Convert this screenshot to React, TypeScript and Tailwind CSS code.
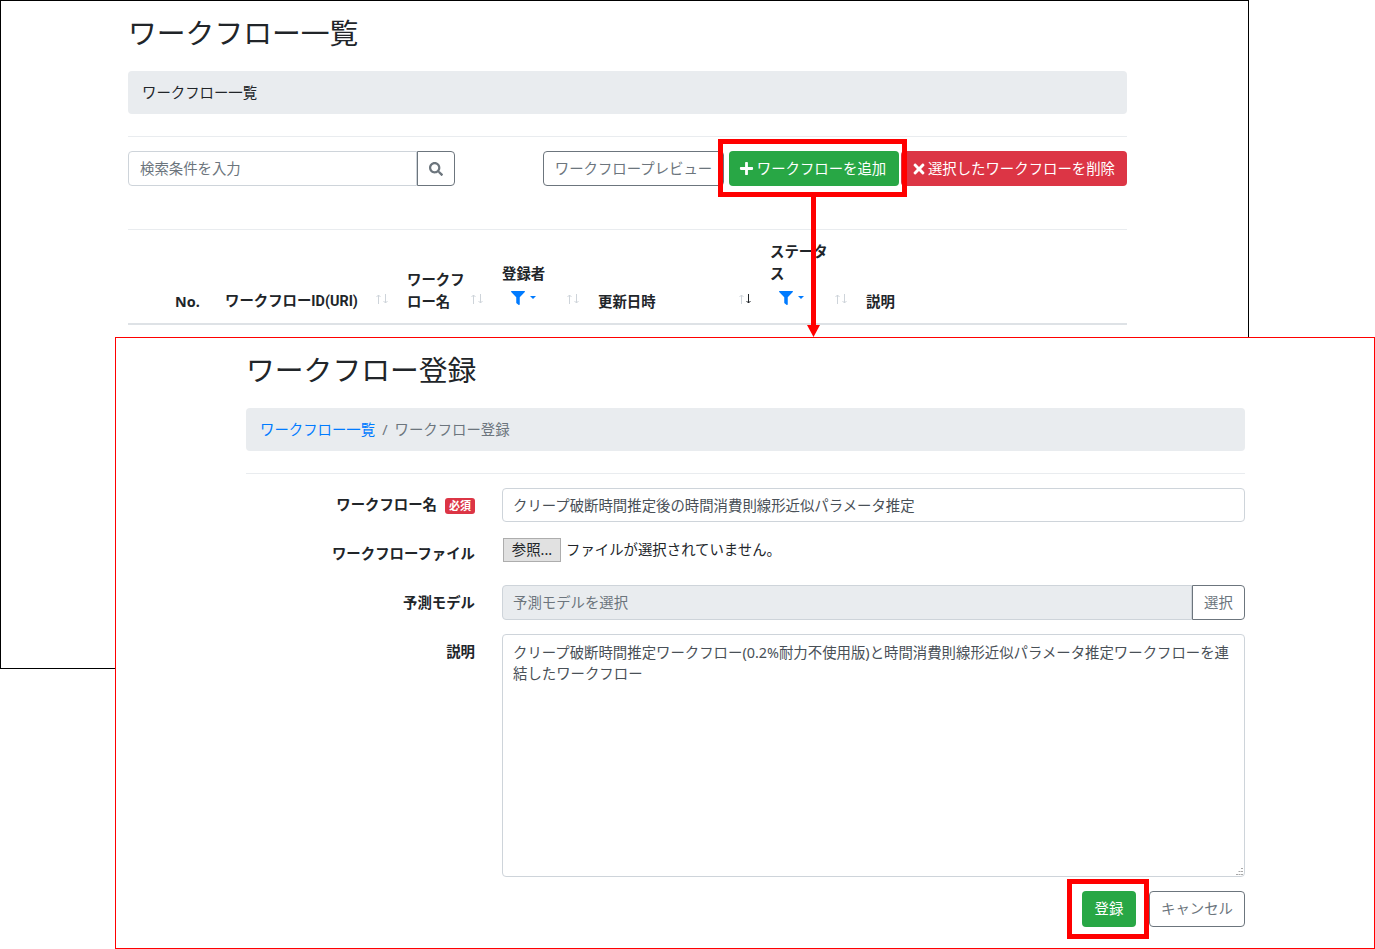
import { FaFilter, FaPlus, FaSearch, FaTimes } from "react-icons/fa"

const WORKFLOW_NAME = "クリープ破断時間推定後の時間消費則線形近似パラメータ推定"
const DESCRIPTION =
  "クリープ破断時間推定ワークフロー(0.2%耐力不使用版)と時間消費則線形近似パラメータ推定ワークフローを連結したワークフロー"

function SortIcon({ active = false }: { active?: boolean }) {
  return (
    <svg width="14" height="10" viewBox="0 0 14 10" fill="none" strokeWidth="1" className="shrink-0 mb-[9px]">
      <path d="M3.5 10V1M1.5 3L3.5 1L5.5 3" stroke="#ced4da" />
      <path d="M10.5 0V9M8.5 7L10.5 9L12.5 7" stroke={active ? "#212529" : "#ced4da"} />
    </svg>
  )
}

function FilterToggle() {
  return (
    <div className="flex items-center h-[25px] pl-[9px] gap-[5px] text-[#007bff]">
      <FaFilter className="w-[14px] h-[14px]" />
      <span className="w-0 h-0 border-x-[3px] border-x-transparent border-t-[3px] border-t-[#007bff]" />
    </div>
  )
}

function HeaderCell({
  width,
  sort = true,
  active = false,
  children,
}: {
  width: string
  sort?: boolean
  active?: boolean
  children: React.ReactNode
}) {
  return (
    <div className={`${width} shrink-0 flex items-end justify-between pl-[10px] pr-[8px] pb-[10px]`}>
      <div className="font-bold leading-[22px]">{children}</div>
      {sort && <SortIcon active={active} />}
    </div>
  )
}

function FilterCell({ width, children }: { width: string; children: React.ReactNode }) {
  return (
    <div className={`${width} shrink-0 flex items-end justify-between pl-[10px] pr-[8px] pb-[10px]`}>
      <div className="font-bold leading-[22px] mb-[3px]">
        {children}
        <FilterToggle />
      </div>
      <SortIcon />
    </div>
  )
}

function PageHeading({ title, children }: { title: string; children: React.ReactNode }) {
  return (
    <>
      <h1 className="text-[28.8px] leading-[34px] pt-[15px] text-[#212529]">{title}</h1>
      <div className="mt-[21px] h-[43px] bg-[#e9ecef] rounded flex items-center px-[14px]">{children}</div>
      <div className="mt-[22px] border-t border-[#e9ecef]" />
    </>
  )
}

function WorkflowList() {
  return (
    <div className="absolute left-0 top-0 w-[1249px] h-[669px] border border-black bg-white pl-[127px]">
      <div className="w-[999px]">
        <PageHeading title="ワークフロー一覧">
          <span>ワークフロー一覧</span>
        </PageHeading>

        <div className="mt-[14px] flex items-center h-[35px]">
          <div className="flex w-[327px] h-[35px]">
            <div className="flex-1 border border-[#ced4da] rounded-l px-[11px] flex items-center text-[#6c757d]">
              検索条件を入力
            </div>
            <div className="w-[38px] border border-[#6c757d] rounded-r flex items-center justify-center text-[#6c757d]">
              <FaSearch className="w-[14px] h-[14px]" />
            </div>
          </div>
          <div className="ml-auto flex h-[35px]">
            <div className="w-[181px] border border-[#6c757d] rounded flex items-center justify-center text-[#6c757d]">
              ワークフロープレビュー
            </div>
            <div className="ml-[5px] w-[170px] bg-[#28a745] rounded text-white flex items-center justify-center gap-[3px] pr-[3px]">
              <FaPlus className="w-[15px] h-[15px]" />
              ワークフローを追加
            </div>
            <div className="ml-[2px] w-[226px] bg-[#dc3545] rounded text-white flex items-center justify-end pr-[12px] gap-[1px]">
              <FaTimes className="w-[16px] h-[16px]" />
              選択したワークフローを削除
            </div>
          </div>
        </div>

        <div className="mt-[43px] border-t border-[#e9ecef]" />
        <div className="flex items-stretch h-[95px] border-b-2 border-[#dee2e6]">
          <div className="w-[87px] shrink-0 flex items-end pl-[47px] pb-[10px] font-bold leading-[22px]">No.</div>
          <HeaderCell width="w-[182px]">
            ワークフロー<span className="font-['Roboto']">ID(URI)</span>
          </HeaderCell>
          <HeaderCell width="w-[95px]">
            ワークフ
            <br />
            ロー名
          </HeaderCell>
          <FilterCell width="w-[96px]">登録者</FilterCell>
          <HeaderCell width="w-[172px]" active>
            更新日時
          </HeaderCell>
          <FilterCell width="w-[96px]">
            ステータ
            <br />ス
          </FilterCell>
          <HeaderCell width="flex-1" sort={false}>
            説明
          </HeaderCell>
        </div>
      </div>
    </div>
  )
}

function FormRow({ label, children, top = false }: { label: React.ReactNode; children: React.ReactNode; top?: boolean }) {
  return (
    <div className="flex">
      <div
        className={`w-[229px] shrink-0 flex justify-end font-bold ${top ? "pt-[7px]" : "items-center"}`}
      >
        {label}
      </div>
      <div className="ml-[27px] flex-1 min-w-0">{children}</div>
    </div>
  )
}

function WorkflowForm() {
  return (
    <div className="absolute left-[115px] top-[337px] w-[1260px] h-[612px] border border-[#ff0000] bg-white pl-[130px]">
      <div className="w-[999px]">
        <PageHeading title="ワークフロー登録">
          <span className="text-[#007bff]">ワークフロー一覧</span>
          <span className="text-[#6c757d] px-[7px]">/</span>
          <span className="text-[#6c757d]">ワークフロー登録</span>
        </PageHeading>

        <div className="mt-[14px]">
          <FormRow
            label={
              <span className="flex items-center gap-[8px]">
                ワークフロー名
                <span className="mt-[2px] w-[30px] h-[16px] rounded-[3px] bg-[#dc3545] text-white text-[11px] leading-[16px] text-center">
                  必須
                </span>
              </span>
            }
          >
            <input
              readOnly
              value={WORKFLOW_NAME}
              className="w-full h-[34px] border border-[#ced4da] rounded px-[10px] pb-[2px] text-[#495057] outline-none"
            />
          </FormRow>
        </div>

        <div className="mt-[15px] h-[48px]">
          <FormRow label={<span className="-mt-px">ワークフローファイル</span>} top>
            <div className="flex items-center gap-[5px] pl-px pt-px">
              <span className="w-[58px] h-[24px] bg-[#e1e1e1] border border-[#adadad] flex items-center justify-center">
                参照...
              </span>
              ファイルが選択されていません。
            </div>
          </FormRow>
        </div>

        <FormRow label="予測モデル">
          <div className="flex h-[35px]">
            <div className="flex-1 bg-[#e9ecef] border border-[#ced4da] rounded-l px-[10px] flex items-center text-[#6c757d]">
              予測モデルを選択
            </div>
            <div className="w-[53px] border border-[#6c757d] rounded-r flex items-center justify-center text-[#6c757d]">
              選択
            </div>
          </div>
        </FormRow>

        <div className="mt-[14px]">
          <FormRow label="説明" top>
            <div className="relative">
              <textarea
                readOnly
                value={DESCRIPTION}
                className="block w-full h-[243px] resize-none border border-[#ced4da] rounded px-[10px] py-[7px] leading-[21px] text-[#495057] outline-none"
              />
              {/* resize grip */}
              <svg className="absolute right-[2px] bottom-[2px]" width="7" height="7" viewBox="0 0 7 7" fill="#a8a8a8">
                <rect x="5" y="0" width="2" height="1" />
                <rect x="2.5" y="3" width="2" height="1" />
                <rect x="5" y="3" width="2" height="1" />
                <rect x="0" y="6" width="2" height="1" />
                <rect x="2.5" y="6" width="2" height="1" />
                <rect x="5" y="6" width="2" height="1" />
              </svg>
            </div>
          </FormRow>
        </div>

        <div className="mt-[14px] flex justify-end">
          <div className="w-[54px] h-[36px] bg-[#28a745] rounded text-white flex items-center justify-center">登録</div>
          <div className="ml-[13px] w-[96px] h-[36px] border border-[#6c757d] rounded text-[#6c757d] flex items-center justify-center">
            キャンセル
          </div>
        </div>
      </div>
    </div>
  )
}

export default function App() {
  return (
    <div className="relative w-[1375px] h-[949px] bg-white overflow-hidden text-[14.4px] text-[#212529] font-['Noto_Sans','Noto_Sans_CJK_JP',sans-serif]">
      <WorkflowList />
      <WorkflowForm />

      {/* red annotations on top of both screens */}
      <div className="absolute left-[718px] top-[139px] w-[189px] h-[58px] border-[5px] border-[#ff0000]" />
      <div className="absolute left-[1067px] top-[879px] w-[82px] h-[60px] border-[5px] border-[#ff0000]" />
      <svg className="absolute left-[807px] top-[197px]" width="13" height="140" viewBox="0 0 13 140">
        <path d="M4 0H9V128H13L6.5 140L0 128H4Z" fill="#ff0000" />
      </svg>
    </div>
  )
}
